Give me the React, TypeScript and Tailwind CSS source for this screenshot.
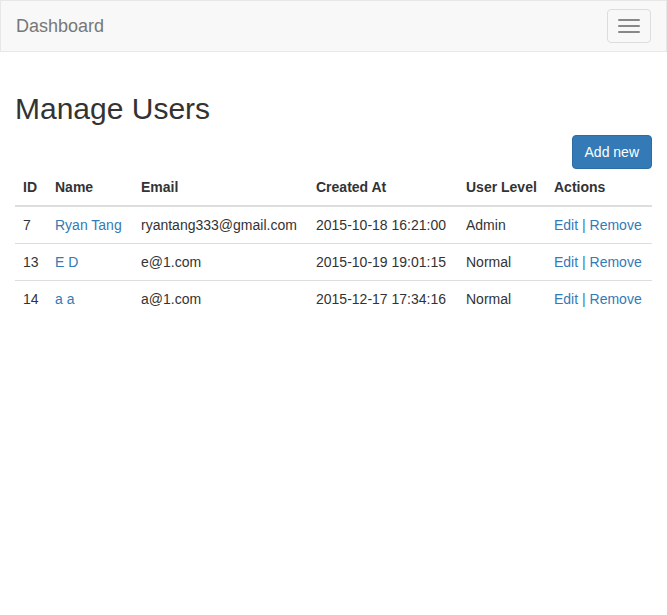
import React from "react";

const users = [
  { id: 7, name: "Ryan Tang", email: "ryantang333@gmail.com", created: "2015-10-18 16:21:00", level: "Admin" },
  { id: 13, name: "E D", email: "e@1.com", created: "2015-10-19 19:01:15", level: "Normal" },
  { id: 14, name: "a a", email: "a@1.com", created: "2015-12-17 17:34:16", level: "Normal" },
];

export default function App() {
  return (
    <div className="min-h-[615px] bg-white text-[14px] leading-[20px] text-[#333]" style={{ fontFamily: '"Liberation Sans", Arial, sans-serif' }}>
      <nav className="flex h-[52px] items-center justify-between border border-[#e7e7e7] bg-[#f8f8f8]">
        <span className="pl-[15px] text-[18px] leading-[20px] text-[#777]">Dashboard</span>
        <button className="mr-[15px] flex h-[34px] w-[44px] flex-col items-center justify-center gap-[4px] rounded-[4px] border border-[#ddd]">
          <span className="block h-[2px] w-[22px] rounded-[1px] bg-[#888]" />
          <span className="block h-[2px] w-[22px] rounded-[1px] bg-[#888]" />
          <span className="block h-[2px] w-[22px] rounded-[1px] bg-[#888]" />
        </button>
      </nav>
      <div className="px-[15px]">
        <h1 className="mt-[40px] text-[30px] font-normal leading-[33px] text-[#333]">Manage Users</h1>
        <div className="mt-[10px] flex justify-end">
          <button className="h-[34px] rounded-[4px] border border-[#2e6da4] bg-[#337ab7] px-[12px] text-[14px] leading-[20px] text-white">Add new</button>
        </div>
        <table className="w-full table-fixed border-collapse">
          <colgroup>
            <col className="w-[32px]" />
            <col className="w-[86px]" />
            <col className="w-[175px]" />
            <col className="w-[150px]" />
            <col className="w-[88px]" />
            <col className="w-[106px]" />
          </colgroup>
          <thead>
            <tr>
              {["ID", "Name", "Email", "Created At", "User Level", "Actions"].map((h) => (
                <th key={h} className="whitespace-nowrap border-b-2 border-[#ddd] p-[8px] text-left font-bold">{h}</th>
              ))}
            </tr>
          </thead>
          <tbody>
            {users.map((u, i) => (
              <tr key={u.id}>
                <td className={`p-[8px] ${i > 0 ? "border-t border-[#ddd]" : ""}`}>{u.id}</td>
                <td className={`whitespace-nowrap p-[8px] text-[#337ab7] ${i > 0 ? "border-t border-[#ddd]" : ""}`}>{u.name}</td>
                <td className={`whitespace-nowrap p-[8px] ${i > 0 ? "border-t border-[#ddd]" : ""}`}>{u.email}</td>
                <td className={`whitespace-nowrap p-[8px] ${i > 0 ? "border-t border-[#ddd]" : ""}`}>{u.created}</td>
                <td className={`whitespace-nowrap p-[8px] ${i > 0 ? "border-t border-[#ddd]" : ""}`}>{u.level}</td>
                <td className={`whitespace-nowrap p-[8px] text-[#337ab7] ${i > 0 ? "border-t border-[#ddd]" : ""}`}>Edit | Remove</td>
              </tr>
            ))}
          </tbody>
        </table>
      </div>
    </div>
  );
}
